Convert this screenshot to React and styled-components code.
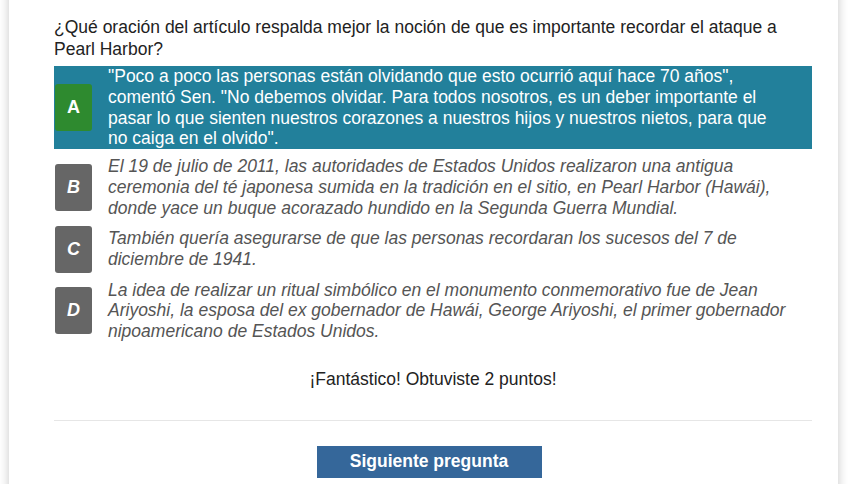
import React from 'react';
import styled, { createGlobalStyle } from 'styled-components';

const GlobalStyle = createGlobalStyle`
  html, body {
    margin: 0;
    padding: 0;
    background: #ffffff;
    overflow: hidden;
  }
  body {
    font-family: "Liberation Sans", Arial, sans-serif;
  }
`;

const Card = styled.div`
  margin: -20px 10px 0 9px;
  padding: 37px 26px 40px 45px;
  background: #ffffff;
  box-shadow: 0 0 10px rgba(0, 0, 0, 0.22);
  min-height: 520px;
`;

const Question = styled.p`
  margin: 0 0 6px;
  font-size: 17.5px;
  line-height: 21.5px;
  color: #222;
`;

const Options = styled.div`
  display: flex;
  flex-direction: column;
  gap: 7px;
`;

const Option = styled.div`
  display: flex;
  align-items: center;
  gap: 16px;
  background: ${(p) => (p.$selected ? '#22809b' : 'transparent')};
  color: ${(p) => (p.$selected ? '#ffffff' : '#555555')};
  font-style: ${(p) => (p.$selected ? 'normal' : 'italic')};
  font-size: 17.5px;
  padding-right: 22px;
`;

const Badge = styled.div`
  flex: 0 0 37px;
  height: 47px;
  margin-left: 1px;
  border-radius: 3px;
  display: flex;
  align-items: center;
  justify-content: center;
  background: ${(p) => (p.$correct ? '#2e8a2f' : '#666666')};
  color: #ffffff;
  font-weight: bold;
  font-size: 18px;
`;

const OptionText = styled.div`
  flex: 1;
  line-height: 20.8px;
`;

const Feedback = styled.p`
  margin: 27px 0 0;
  text-align: center;
  font-size: 17.5px;
  line-height: 20px;
  color: #222;
`;

const Divider = styled.hr`
  border: none;
  border-top: 1px solid #e6e6e6;
  margin: 31px 0 25px;
`;

const Actions = styled.div`
  display: flex;
  justify-content: center;
`;

const NextButton = styled.button`
  width: 225px;
  height: 32px;
  margin-right: 8px;
  border: none;
  border-radius: 0;
  background: #35679a;
  color: #ffffff;
  font-family: "Liberation Sans", Arial, sans-serif;
  font-size: 17.5px;
  font-weight: bold;
  cursor: pointer;
`;

const options = [
  {
    letter: 'A',
    text: '"Poco a poco las personas están olvidando que esto ocurrió aquí hace 70 años", comentó Sen. "No debemos olvidar. Para todos nosotros, es un deber importante el pasar lo que sienten nuestros corazones a nuestros hijos y nuestros nietos, para que no caiga en el olvido".',
    selected: true,
  },
  {
    letter: 'B',
    text: 'El 19 de julio de 2011, las autoridades de Estados Unidos realizaron una antigua ceremonia del té japonesa sumida en la tradición en el sitio, en Pearl Harbor (Hawái), donde yace un buque acorazado hundido en la Segunda Guerra Mundial.',
  },
  {
    letter: 'C',
    text: 'También quería asegurarse de que las personas recordaran los sucesos del 7 de diciembre de 1941.',
  },
  {
    letter: 'D',
    text: 'La idea de realizar un ritual simbólico en el monumento conmemorativo fue de Jean Ariyoshi, la esposa del ex gobernador de Hawái, George Ariyoshi, el primer gobernador nipoamericano de Estados Unidos.',
  },
];

const App = () => {
  return (
    <>
      <GlobalStyle />
      <Card>
        <Question>
          ¿Qué oración del artículo respalda mejor la noción de que es importante recordar el ataque a Pearl Harbor?
        </Question>
        <Options>
          {options.map((o) => (
            <Option key={o.letter} $selected={o.selected}>
              <Badge $correct={o.selected}>{o.letter}</Badge>
              <OptionText>{o.text}</OptionText>
            </Option>
          ))}
        </Options>
        <Feedback>¡Fantástico! Obtuviste 2 puntos!</Feedback>
        <Divider />
        <Actions>
          <NextButton>Siguiente pregunta</NextButton>
        </Actions>
      </Card>
    </>
  );
};

export default App;
